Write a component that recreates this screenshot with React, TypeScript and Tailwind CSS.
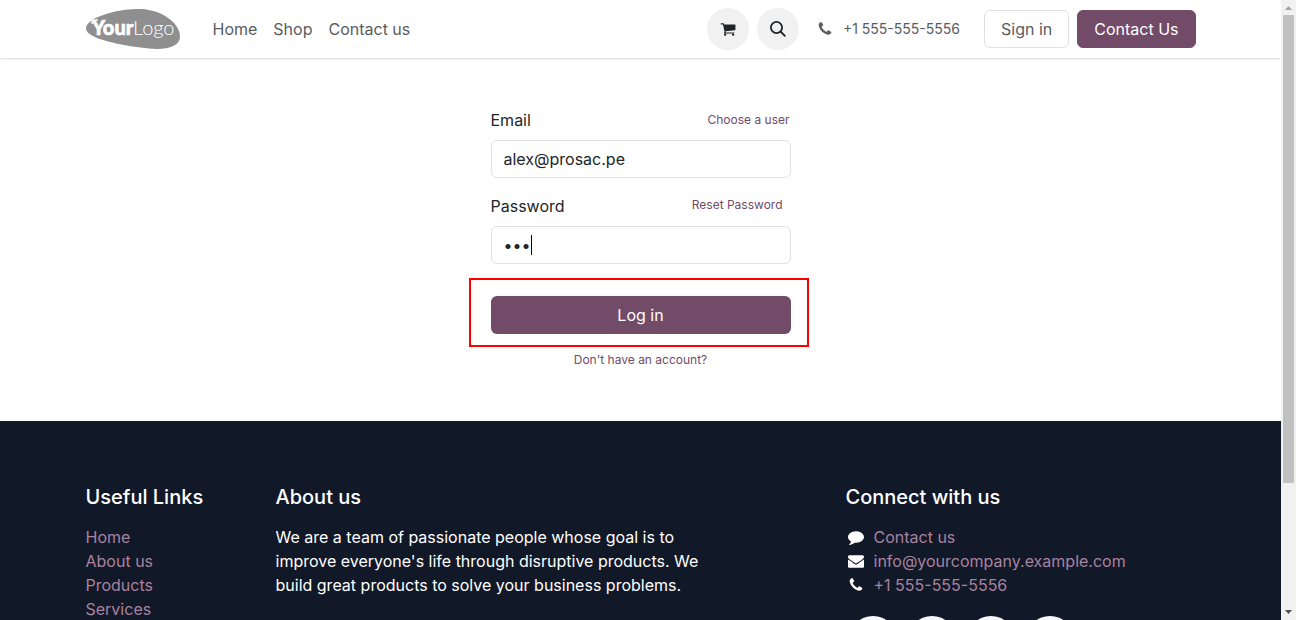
import type { ReactNode } from 'react'

const usefulLinks = ['Home', 'About us', 'Products', 'Services']

const icons = {
  cart: 'M704 1536q0 52-38 90t-90 38-90-38-38-90 38-90 90-38 90 38 38 90zm896 0q0 52-38 90t-90 38-90-38-38-90 38-90 90-38 90 38 38 90zm128-1088v512q0 24-16.5 42.5t-40.5 21.5l-1044 122q13 60 13 70 0 16-24 64h920q26 0 45 19t19 45-19 45-45 19h-1024q-26 0-45-19t-19-45q0-11 8-31.5t16-36 21.5-40 15.5-29.5l-177-823h-204q-26 0-45-19t-19-45 19-45 45-19h256q16 0 28.5 6.5t19.5 15.5 13 24.5 8 26 5.5 29.5 4.5 26h1201q26 0 45 19t19 45z',
  phone: 'M1600 1240q0 27-10 70.5t-21 68.5q-21 50-122 106-94 51-186 51-27 0-53-3.5t-57.5-12.5-47-14.5-55.5-20.5-49-18q-98-35-175-83-127-79-264-216t-216-264q-48-77-83-175-3-9-18-49t-20.5-55.5-14.5-47-12.5-57.5-3.5-53q0-92 51-186 56-101 106-122 25-11 68.5-21t70.5-10q14 0 21 3 18 6 53 76 11 19 30 54t35 63.5 31 53.5q3 4 17.5 25t21.5 35.5 7 28.5q0 20-28.5 50t-62 55-62 53-28.5 46q0 9 5 22.5t8.5 20.5 14 24 11.5 19q76 137 174 235t235 174q2 1 19 11.5t24 14 20.5 8.5 22.5 5q18 0 46-28.5t53-62 55-62 50-28.5q14 0 28.5 7t35.5 21.5 25 17.5q25 15 53.5 31t63.5 35 54 30q70 35 76 53 3 7 3 21z',
  comment: 'M1792 896q0 174-120 321.5t-326 233-450 85.5q-70 0-145-8-198 175-460 242-49 14-114 22-17 2-30.5-9t-17.5-29v-1q-3-4-.5-12t2-10 4.5-9.5l6-9 7-8.5 8-9q7-8 31-34.5t34.5-38 31-39.5 32.5-51 27-59 26-76q-157-89-247.5-220t-90.5-281q0-130 71-248.5t191-204.5 286-136.5 348-50.5q244 0 450 85.5t326 233 120 321.5z',
  envelope: 'M1792 710v794q0 66-47 113t-113 47h-1472q-66 0-113-47t-47-113v-794q44 49 101 87 362 246 497 345 57 42 92.5 65.5t94.5 48 110 24.5h2q51 0 110-24.5t94.5-48 92.5-65.5q170-123 498-345 57-39 100-87zm0-294q0 79-49 151t-122 123q-376 261-468 325-10 7-42.5 31t-54 38.5-52 32.5-57.5 27-50 9h-2q-23 0-50-9t-57.5-27-52-32.5-54-38.5-42.5-31q-91-64-262-182.5t-205-142.5q-62-42-117-115.5t-55-136.5q0-78 41.5-130t118.5-52h1472q65 0 112.5 47t47.5 113z',
}

function Icon({ name, className }: { name: keyof typeof icons; className: string }) {
  return (
    <svg viewBox="0 0 1792 1792" fill="currentColor" className={className} aria-hidden="true">
      <path d={icons[name]} />
    </svg>
  )
}

function Logo() {
  return (
    <svg viewBox="0 0 95 40" className="h-10 w-[95px]" role="img" aria-label="Your Logo">
      <path
        d="M0 19C1 13 8 9 20 5C32 1 44 0 55 0C76 1 94 14 94 28C94 36 84 40 71 40C50 39 24 34 11 29C4 26 0 23 0 19Z"
        fill="#8f8f8f"
      />
      <path d="M4 11.5L12 11M5 14L9 13.500" stroke="#fff" strokeWidth="1.500" />
      <text x="6" y="26" fill="#fff" stroke="#fff" strokeWidth="0.600" fontFamily="Lato, sans-serif" fontSize="20" fontWeight="900">Your</text>
      <text x="47" y="26" fill="#fff" fontFamily="Lato, sans-serif" fontSize="20" fontWeight="300">Logo</text>
    </svg>
  )
}

function Header() {
  return (
    <header className="h-[58px] shrink-0 shadow-[0_1px_2px_rgba(0,0,0,0.15)]">
      <div className="mx-auto flex h-full max-w-[1140px] items-center px-[15px] text-[#5a5c5f]">
        <a href="#"><Logo /></a>
        <nav className="ml-6 flex">
          <a href="#" className="px-2">Home</a>
          <a href="#" className="px-2">Shop</a>
          <a href="#" className="px-2">Contact us</a>
        </nav>

        <div className="ml-auto flex items-center gap-2 text-[#212529]">
          <a href="#" aria-label="Cart" className="flex size-[42px] items-center justify-center rounded-full bg-[#f1f1f1]">
            <Icon name="cart" className="size-4" />
          </a>
          <button aria-label="Search" className="flex size-[42px] items-center justify-center rounded-full bg-[#f1f1f1]">
            <svg viewBox="0 0 16 16" fill="none" stroke="currentColor" strokeWidth="1.8" className="size-4" aria-hidden="true">
              <circle cx="6.5" cy="6.5" r="5.6" />
              <path d="M10.5 10.5L15.4 15.4" />
            </svg>
          </button>
        </div>

        <a href="#" className="ml-[18px] flex items-center gap-[10px] text-sm">
          <Icon name="phone" className="size-4" />
          +1 555-555-5556
        </a>
        <a href="#" className="ml-6 rounded-md border border-[#dee2e6] px-4 py-[6px]">Sign in</a>
        <a href="#" className="ml-2 rounded-md border border-[#714b67] bg-[#714b67] px-4 py-[6px] text-white">Contact Us</a>
      </div>
    </header>
  )
}

function LoginForm() {
  return (
    <form className="mx-auto flex w-[300px] flex-col pt-[50px] pb-[52px]" onSubmit={(e) => e.preventDefault()}>
      <div className="mb-2 flex justify-between">
        <label htmlFor="login">Email</label>
        <a href="#" className="mr-px text-xs leading-6 text-[#714b67]">Choose a user</a>
      </div>
      <input
        id="login"
        type="text"
        defaultValue="alex@prosac.pe"
        className="h-[38px] rounded-md border border-[#dee2e6] px-3 outline-none"
      />

      <div className="mt-4 mb-2 flex justify-between">
        <label htmlFor="password">Password</label>
        <a href="#" className="mr-2 text-xs leading-[22px] text-[#714b67]">Reset Password</a>
      </div>
      <div className="relative">
        <input
          id="password"
          type="password"
          defaultValue="123"
          className="h-[38px] w-full rounded-md border border-[#dee2e6] px-3 caret-transparent outline-none"
        />
        {/* text caret */}
        <span className="absolute top-[9px] left-10 h-5 w-px bg-black" />
      </div>

      <div className="mt-[14px] -mr-[18px] -ml-[22px] border-2 border-[#ff0000] pt-4 pr-4 pb-[11px] pl-5">
        <button type="submit" className="h-[38px] w-full rounded-md bg-[#714b67] text-white">Log in</button>
      </div>
      <a href="#" className="mt-1 text-center text-xs leading-[18px] text-[#714b67]">Don't have an account?</a>
    </form>
  )
}

function ContactRow({ icon, children }: { icon: ReactNode; children: ReactNode }) {
  return (
    <li className="flex items-center">
      <span className="mr-2 flex w-5 justify-center text-white">{icon}</span>
      <a href="#">{children}</a>
    </li>
  )
}

function Footer() {
  return (
    <footer className="shrink-0 grow bg-[#111827] pt-16 text-white">
      <div className="mx-auto grid max-w-[1140px] grid-cols-12">
        <div className="col-span-2 px-[15px]">
          <h5 className="mb-4 text-xl leading-6 font-medium">Useful Links</h5>
          <ul className="text-[#a883a0]">
            {usefulLinks.map((link) => (
              <li key={link}><a href="#">{link}</a></li>
            ))}
          </ul>
        </div>

        <div className="col-span-5 px-[15px]">
          <h5 className="mb-4 text-xl leading-6 font-medium">About us</h5>
          <p>
            We are a team of passionate people whose goal is to improve everyone's life through disruptive products.
            We build great products to solve your business problems.
          </p>
        </div>

        <div className="col-span-4 col-start-9 px-[15px]">
          <h5 className="mb-4 text-xl leading-6 font-medium">Connect with us</h5>
          <ul className="text-[#a883a0]">
            <ContactRow icon={<Icon name="comment" className="size-4" />}>Contact us</ContactRow>
            <ContactRow icon={<Icon name="envelope" className="size-4" />}>info@yourcompany.example.com</ContactRow>
            <ContactRow icon={<Icon name="phone" className="size-4" />}>+1 555-555-5556</ContactRow>
          </ul>
          <div className="mt-[19px] flex gap-[11px] pl-[3px]">
            <a href="#" aria-label="Facebook" className="size-12 rounded-full bg-[#f8f9fa]" />
            <a href="#" aria-label="Twitter" className="size-12 rounded-full bg-[#f8f9fa]" />
            <a href="#" aria-label="LinkedIn" className="size-12 rounded-full bg-[#f8f9fa]" />
            <a href="#" aria-label="Home page" className="size-12 rounded-full bg-[#f8f9fa]" />
          </div>
        </div>
      </div>
    </footer>
  )
}

function Scrollbar() {
  return (
    <div className="flex w-[15px] shrink-0 flex-col items-center bg-[#f1f1f1]" aria-hidden="true">
      <svg viewBox="0 0 15 15" className="size-[15px] shrink-0"><path d="M4 10h7L7.500 6z" fill="#a3a3a3" /></svg>
      <div className="h-[468px] w-[11px] bg-[#c1c1c1]" />
      <svg viewBox="0 0 15 15" className="mt-auto size-[15px] shrink-0"><path d="M4 5h7L7.500 9z" fill="#505050" /></svg>
    </div>
  )
}

export default function App() {
  return (
    <div className="flex h-screen overflow-hidden bg-white font-['Inter',sans-serif] text-base text-[#212529]">
      <div className="flex min-w-0 flex-1 flex-col overflow-hidden">
        <Header />
        <main className="shrink-0">
          <LoginForm />
        </main>
        <Footer />
      </div>
      <Scrollbar />
    </div>
  )
}
